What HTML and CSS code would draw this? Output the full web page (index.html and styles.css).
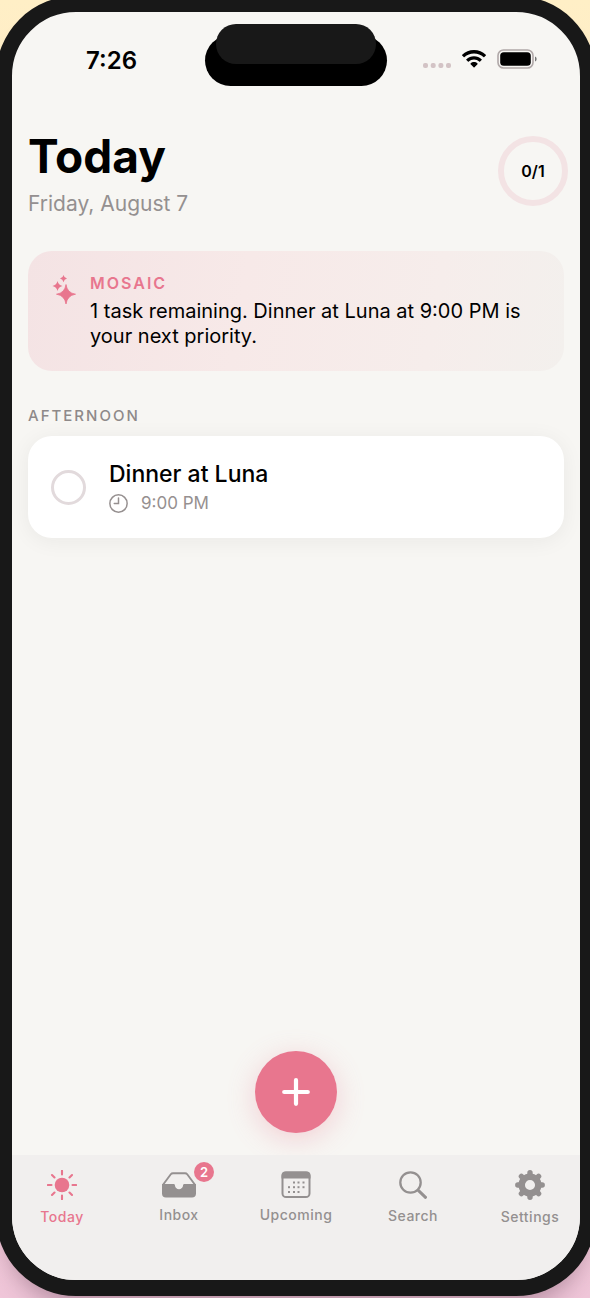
FILE: index.html
```html
<!DOCTYPE html>
<html lang="en">
<head>
<meta charset="utf-8">
<meta name="viewport" content="width=device-width, initial-scale=1">
<title>Today</title>
<link rel="stylesheet" href="styles.css">
</head>
<body>
<div class="stage">
  <div class="phone">
    <div class="status-bar">
      <time class="status-time">7:26</time>
      <div class="island"><div class="notch"></div></div>
      <div class="status-icons">
        <svg class="signal" viewBox="0 0 28 6" aria-hidden="true"><g fill="#d3c3c5"><rect x="0" y="1" width="5" height="5" rx="2"/><rect x="7.7" y="1" width="5" height="5" rx="2"/><rect x="15.4" y="1" width="5" height="5" rx="2"/><rect x="23" y="1" width="5" height="5" rx="2"/></g></svg>
        <svg class="wifi" viewBox="0 0 24 18" aria-hidden="true"><path d="M12 0C7.400 0 3.200 1.800.2 4.700c-.3.300-.3.600 0 .9l1.500 1.500c.3.300.6.300.9 0C5 4.700 8.300 3.400 12 3.400s7 1.300 9.400 3.700c.3.300.6.300.9 0l1.500-1.500c.3-.3.300-.6 0-.9C20.800 1.800 16.600 0 12 0zM12 6.200c-2.900 0-5.600 1.100-7.600 3-.3.300-.3.600 0 .9l1.500 1.500c.3.300.6.300.9 0 1.400-1.300 3.200-2 5.200-2s3.800.7 5.200 2c.3.300.6.300.9 0l1.500-1.500c.3-.3.300-.6 0-.9-2-1.900-4.700-3-7.600-3zM12 12.100c-1.300 0-2.500.5-3.400 1.300-.3.300-.3.600 0 .9l3 3c.3.300.6.300.9 0l3-3c.3-.3.300-.6 0-.9-.9-.8-2.200-1.300-3.500-1.300z"/></svg>
        <svg class="battery" viewBox="0 0 40 20" aria-hidden="true"><rect x="1" y="1" width="35" height="18" rx="5.500" fill="none" stroke="#b0a8a8" stroke-width="1.600"/><rect x="3.200" y="3.200" width="30.600" height="13.600" rx="3.600"/><path d="M38 7.500c1.200.5 1.600 1.400 1.600 2.500s-.4 2-1.600 2.500z" fill="#777"/></svg>
      </div>
    </div>

    <main class="content">
      <header class="page-header">
        <div>
          <h1 class="title">Today</h1>
          <p class="date">Friday, August 7</p>
        </div>
        <div class="progress">0/1</div>
      </header>

      <section class="summary">
        <svg class="sparkles" viewBox="0 0 24 30" aria-hidden="true"><g fill="#e8768e"><path d="M13.500 9.500Q14.700 18 23 19.200 14.700 20.500 13.500 29 12.300 20.500 4 19.200 12.300 18 13.500 9.500z" stroke="#e8768e" stroke-width=".8" stroke-linejoin="round"/><path d="M5 6q.8 4 5 5-4.200 1-5 5-.8-4-5-5 4.200-1 5-5z"/><path d="M11 0q.6 3 3.500 3.600Q11.600 4.300 11 7.200 10.400 4.300 7.500 3.600 10.400 3 11 0z"/></g></svg>
        <div>
          <h2 class="summary-label">MOSAIC</h2>
          <p class="summary-text">1 task remaining. Dinner at Luna at 9:00 PM is your next priority.</p>
        </div>
      </section>

      <section>
        <h2 class="group-label">AFTERNOON</h2>
        <div class="task">
          <input class="task-check" type="checkbox" id="task-dinner">
          <div>
            <label class="task-name" for="task-dinner">Dinner at Luna</label>
            <p class="task-time">
              <svg class="clock" viewBox="0 0 18 18" fill="none" stroke="#969090" stroke-width="1.400" stroke-linecap="round" aria-hidden="true"><circle cx="9" cy="9" r="8.200"/><path d="M9 3.800V9H5"/></svg>
              <span>9:00 PM</span>
            </p>
          </div>
        </div>
      </section>
    </main>

    <button class="add" type="button" aria-label="Add task"><svg class="plus" viewBox="0 0 28 28" aria-hidden="true"><path d="M14 2.200v23.600M2.200 14h23.600" stroke="#fff" stroke-width="4.200" stroke-linecap="round"/></svg></button>

    <nav class="tabs">
      <button class="tab tab-active" type="button">
        <svg class="icon-large" viewBox="0 0 30 30" aria-hidden="true"><circle cx="15" cy="15" r="7.300" fill="currentColor"/><path d="M15 .8v3.700M15 25.500v3.700M.8 15h3.700M25.500 15h3.700M5 5l2.500 2.500M22.500 22.500 25 25M5 25l2.500-2.500M22.500 7.500 25 5" stroke="currentColor" stroke-width="2.100" stroke-linecap="round"/></svg>
        <span>Today</span>
      </button>
      <button class="tab" type="button">
        <span class="icon-wrap">
          <svg class="icon-inbox" viewBox="0 0 34 26" aria-hidden="true"><path d="M1.200 13V12.500L8.800 2.300Q9.600 1.200 11 1.200H23Q24.400 1.200 25.200 2.300L32.800 12.500V13" fill="none" stroke="currentColor" stroke-width="1.900"/><path d="M0 12h11.500c.9 0 1.500.6 1.500 1.500 0 2 1.800 3.700 4 3.700s4-1.700 4-3.700c0-.9.600-1.500 1.500-1.500H34v9.500c0 2.600-1.400 4-4 4H4c-2.600 0-4-1.400-4-4z" fill="currentColor"/></svg>
          <span class="badge">2</span>
        </span>
        <span>Inbox</span>
      </button>
      <button class="tab" type="button">
        <svg class="icon-calendar" viewBox="0 0 30 27" aria-hidden="true"><rect x="1.500" y="1.400" width="27" height="24.600" rx="3.600" fill="none" stroke="currentColor" stroke-width="2"/><path d="M.5 7.500V4.500Q.5.400 4.500.4h21q4 0 4 4.100v3z" fill="currentColor"/><g fill="currentColor"><rect x="12" y="10.500" width="2" height="2"/><rect x="16.500" y="10.500" width="2" height="2"/><rect x="21.500" y="10.500" width="2" height="2"/><rect x="7" y="15.200" width="2" height="2"/><rect x="12" y="15.200" width="2" height="2"/><rect x="16.500" y="15.200" width="2" height="2"/><rect x="21.500" y="15.200" width="2" height="2"/><rect x="7" y="20" width="2" height="2"/><rect x="12" y="20" width="2" height="2"/><rect x="16.500" y="20" width="2" height="2"/></g></svg>
        <span>Upcoming</span>
      </button>
      <button class="tab" type="button">
        <svg class="icon-search" viewBox="0 0 28 28" fill="none" stroke="currentColor" stroke-linecap="round" aria-hidden="true"><circle cx="11.500" cy="11.500" r="10.200" stroke-width="2.300"/><path d="m19.300 19.300 7.200 7" stroke-width="3"/></svg>
        <span>Search</span>
      </button>
      <button class="tab" type="button">
        <svg class="icon-large" viewBox="0 0 30 30" aria-hidden="true"><circle cx="15" cy="15" r="8.300" fill="none" stroke="currentColor" stroke-width="6.500"/><path d="M15 2.800v4M15 23.200v4M2.800 15h4M23.200 15h4M6.400 6.400 9 9M21 21l2.600 2.600M6.400 23.600 9 21M21 9l2.600-2.600" stroke="currentColor" stroke-width="5.400" stroke-linecap="round"/></svg>
        <span>Settings</span>
      </button>
    </nav>
  </div>
</div>
</body>
</html>
```
FILE: styles.css
```css
* { box-sizing: border-box; }

body, h1, h2, p { margin: 0; }

body {
  font-family: Inter, "Liberation Sans", sans-serif;
  color: #000;
}

button {
  font: inherit;
  border: 0;
  padding: 0;
  cursor: pointer;
}

svg { display: block; flex: none; }

.stage {
  display: flex;
  min-height: 100vh;
  overflow: hidden;
  background: linear-gradient(#ffefc6, #f0c6d9);
}

.phone {
  flex: 1;
  display: flex;
  flex-direction: column;
  margin: -4px -6px 2px -4px;
  border: 16px solid #181818;
  border-radius: 80px;
  background: #f7f6f3;
  overflow: hidden;
  box-shadow: 0 20px 24px -12px rgba(60, 30, 50, 0.35);
}

.status-bar {
  display: grid;
  grid-template-columns: 1fr 182px 1fr;
  align-items: center;
  padding-top: 23px;
}

.status-time {
  padding-left: 6px;
  text-align: center;
  font-size: 24px;
  line-height: 30px;
  font-weight: 600;
}

.island {
  position: relative;
  height: 51px;
  border-radius: 26px;
  background: #000;
}

.notch {
  position: absolute;
  top: -11px;
  left: 11px;
  right: 11px;
  height: 40px;
  border-radius: 20px;
  background: #181818;
}

.status-icons {
  display: flex;
  align-items: center;
  justify-content: center;
  gap: 11px;
  padding: 0 8px 3px 0;
}

.signal { width: 28px; height: 6px; margin-top: 12px; }
.wifi { width: 24px; height: 18px; }
.battery { width: 40px; height: 20px; }

.content {
  flex: 1;
  padding: 44px 16px 0;
}

.page-header {
  display: flex;
  justify-content: space-between;
  align-items: flex-start;
  margin-right: -4px;
  padding-top: 6px;
}

.title {
  font-size: 46px;
  line-height: 40px;
  font-weight: 700;
}

.date {
  margin-top: 14px;
  font-size: 21px;
  line-height: 28px;
  color: #949090;
}

.progress {
  display: grid;
  place-items: center;
  width: 70px;
  height: 70px;
  border: 6px solid #f3e3e4;
  border-radius: 50%;
  font-size: 16px;
  font-weight: 600;
}

.summary {
  display: flex;
  gap: 13px;
  margin-top: 33px;
  padding: 22px 24px;
  border-radius: 24px;
  background: linear-gradient(100deg, #f4e3e4, #f7e9e8 40%, #f6edeb 75%, #f3f0ed);
}

.sparkles { width: 25px; height: 30px; margin-top: 2px; }

.summary-label {
  font-size: 16px;
  line-height: 20px;
  font-weight: 600;
  letter-spacing: 2px;
  color: #e8768e;
}

.summary-text {
  margin-top: 6px;
  font-size: 20px;
  line-height: 25px;
}

.group-label {
  margin: 35px 0 10px;
  font-size: 15px;
  line-height: 20px;
  font-weight: 500;
  letter-spacing: 2px;
  color: #8e8989;
}

.task {
  display: flex;
  align-items: center;
  gap: 23px;
  padding: 22px 23px;
  border-radius: 24px;
  background: #fff;
  box-shadow: 0 3px 22px rgba(40, 30, 30, 0.06);
}

.task-check {
  flex: none;
  width: 35px;
  height: 35px;
  margin: 0;
  appearance: none;
  border: 3px solid #e2dadc;
  border-radius: 50%;
}

.task-check:checked { background: #e8768e; }

.task-name {
  display: block;
  font-size: 23px;
  line-height: 32px;
  font-weight: 500;
}

.task-time {
  display: flex;
  align-items: center;
  gap: 13px;
  font-size: 17px;
  line-height: 26px;
  color: #969090;
}

.clock { width: 19px; height: 19px; }

.add {
  display: grid;
  place-items: center;
  align-self: center;
  width: 82px;
  height: 82px;
  margin-bottom: 22px;
  border-radius: 50%;
  background: #e8768e;
  box-shadow: 0 6px 28px rgba(232, 118, 142, 0.3);
}

.plus { width: 28px; height: 28px; }

.tabs {
  display: flex;
  justify-content: space-between;
  height: 125px;
  padding-bottom: 40px;
  background: #f1efee;
}

.tab {
  display: flex;
  flex-direction: column;
  align-items: center;
  justify-content: center;
  gap: 8px;
  width: 100px;
  background: none;
  color: #949090;
  font-size: 14px;
  line-height: 18px;
  font-weight: 500;
  letter-spacing: 0.5px;
}

.tab-active { color: #e8768e; }

.icon-wrap { position: relative; }
.icon-large { width: 30px; height: 30px; }
.icon-inbox { width: 34px; height: 26px; }
.icon-calendar { width: 30px; height: 27px; }
.icon-search { width: 28px; height: 28px; }

.badge {
  position: absolute;
  top: -10px;
  right: -18px;
  width: 20px;
  height: 20px;
  border-radius: 50%;
  background: #e8768e;
  color: #fff;
  font-size: 13px;
  line-height: 20px;
  font-weight: 600;
  letter-spacing: 0;
}
```
